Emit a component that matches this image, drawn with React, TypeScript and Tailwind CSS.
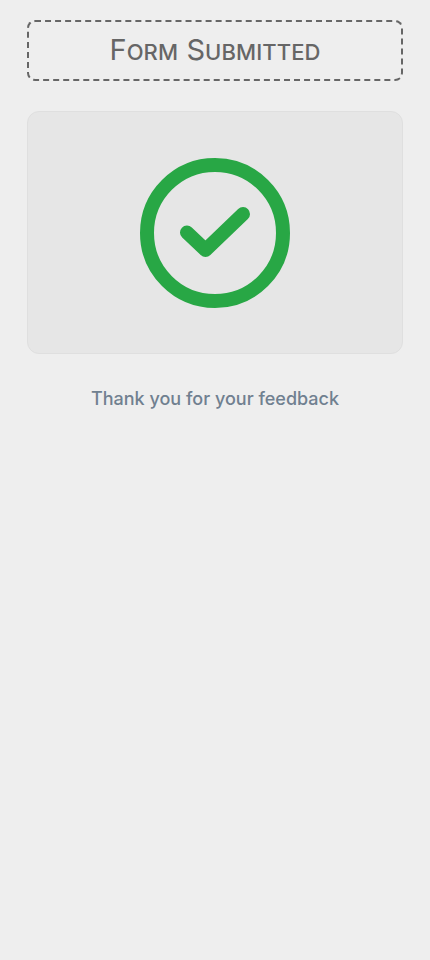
export default function App() {
  return (
    <div className="min-h-screen bg-[#eeeeee] px-[27px] pt-5 font-['Inter',sans-serif]">
      {/* Title */}
      <div className="flex h-[61px] items-center justify-center rounded-lg border-2 border-dashed border-[#666666]">
        <h1 className="mb-[2px] text-[29px] leading-none tracking-[0.1px] text-[#666666]">
          F<span className="text-[22px] font-[450]">ORM</span> S<span className="text-[22px] font-[450]">UBMITTED</span>
        </h1>
      </div>

      {/* Status card */}
      <div className="mt-[30px] flex h-[243px] items-center justify-center rounded-xl border border-[#dfdfdf] bg-[#e6e6e6]">
        <svg width="150" height="150" viewBox="0 0 150 150" fill="none" stroke="#28a745" strokeLinecap="round" strokeLinejoin="round">
          <circle cx="75" cy="75" r="68" strokeWidth="14" />
          <path d="M47 74.5 L65.5 92 L103 56" strokeWidth="14" />
        </svg>
      </div>

      <p className="mt-[34px] text-center text-lg font-[530] leading-[22px] text-[#708090]">Thank you for your feedback</p>
    </div>
  );
}
